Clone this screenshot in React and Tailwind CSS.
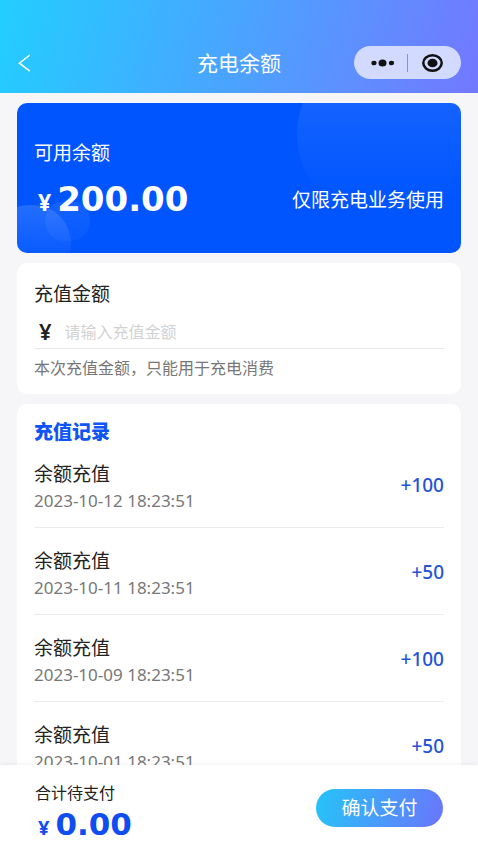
import { useState } from 'react';

const RECORDS = [
  { id: 1, title: '余额充值', time: '2023-10-12 18:23:51', amount: '+100' },
  { id: 2, title: '余额充值', time: '2023-10-11 18:23:51', amount: '+50' },
  { id: 3, title: '余额充值', time: '2023-10-09 18:23:51', amount: '+100' },
  { id: 4, title: '余额充值', time: '2023-10-01 18:23:51', amount: '+50' },
];

// ── Header ────────────────────────────────────────────────────────────────────
function Header() {
  return (
    <header className="grid shrink-0 grid-cols-[1fr_auto_1fr] items-center bg-linear-[105deg] from-[#22ceff] to-[#7378ff] px-[17px] pt-[46px] pb-[14px]">
      <button type="button" aria-label="返回" className="w-4 justify-self-start text-white">
        <svg viewBox="0 0 16 20" className="h-5 w-4" fill="none" stroke="currentColor" strokeWidth="1.5">
          <path d="M12.8 2 L2.4 10.2 L12.8 18.2" />
        </svg>
      </button>
      <h1 className="pb-px text-[21px] leading-[30px] text-white">充电余额</h1>
      <div className="flex h-[33px] w-[107px] items-center justify-self-end rounded-full bg-[#d3daff]">
        <button type="button" aria-label="更多" className="flex flex-1 justify-center pl-1">
          <svg viewBox="0 0 24 10" className="h-[10px] w-6" fill="#111">
            <ellipse cx="3" cy="5" rx="2.6" ry="2.3" />
            <ellipse cx="11.5" cy="5" rx="4" ry="3.5" />
            <ellipse cx="20.5" cy="5" rx="2.6" ry="2.3" />
          </svg>
        </button>
        <span className="h-[18px] w-px bg-[#8d93b0]" />
        <button type="button" aria-label="关闭" className="flex flex-1 justify-center pr-1">
          <svg viewBox="0 0 22 18" className="h-[18px] w-[22px]">
            <ellipse cx="10.5" cy="9" rx="9.2" ry="7.7" fill="none" stroke="#111" strokeWidth="2.5" />
            <ellipse cx="10.5" cy="9" rx="5" ry="4.3" fill="#111" />
          </svg>
        </button>
      </div>
    </header>
  );
}

// ── Balance card ──────────────────────────────────────────────────────────────
function BalanceCard() {
  return (
    <section className="relative overflow-hidden rounded-[10px] bg-[#0055ff] px-[17px] pt-[35px] pb-8 text-white">
      {/* decorative bubbles */}
      <span className="absolute -top-[52px] -right-[40px] h-[166px] w-[204px] rounded-full bg-linear-to-b from-white/8 from-30% to-white/0 to-90%" />
      <span className="absolute top-[102px] -left-[26px] h-[76px] w-[80px] rounded-full bg-linear-to-b from-white/14 to-white/2 to-75%" />
      <span className="absolute top-[98px] left-[28px] h-[40px] w-[45px] rounded-full bg-linear-to-b from-white/8 to-white/3" />
      <h2 className="relative text-[19px] leading-7">可用余额</h2>
      <div className="relative mt-[11px] flex items-center justify-between">
        <p className="flex items-baseline gap-[6px] pl-1 font-bold">
          <span className="font-['Noto_Sans',sans-serif] text-[23px] leading-none">¥</span>
          <span className="font-['DejaVu_Sans',sans-serif] text-[34px] leading-[44px]">200.00</span>
        </p>
        <p className="text-[19px] leading-7">仅限充电业务使用</p>
      </div>
    </section>
  );
}

// ── Amount form ───────────────────────────────────────────────────────────────
function AmountCard({ value, onChange }) {
  return (
    <section className="rounded-[10px] bg-white px-[17px] pt-4 pb-[15px]">
      <label htmlFor="amount" className="block text-[19px] leading-7 text-[#222]">充值金额</label>
      <div className="mt-2 flex h-[34px] items-center gap-[13px] border-b border-[#e8e8e8] pb-px pl-[5px]">
        <span className="font-['Noto_Sans',sans-serif] text-[22px] leading-8 font-semibold text-[#222]">¥</span>
        <input
          id="amount"
          inputMode="decimal"
          value={value}
          onChange={(e) => onChange(e.target.value)}
          placeholder="请输入充值金额"
          className="min-w-0 flex-1 text-base text-[#222] outline-none placeholder:text-[#d2d2d2]"
        />
      </div>
      <p className="mt-[6px] text-base leading-6 text-[#777]">本次充值金额，只能用于充电消费</p>
    </section>
  );
}

// ── Recharge records ──────────────────────────────────────────────────────────
function RecordList() {
  return (
    <section className="rounded-[10px] bg-white px-[17px] pt-[17px]">
      <h2 className="text-[19px] leading-5 font-black text-[#0f55f5]">充值记录</h2>
      <ul>
        {RECORDS.map((r) => (
          <li key={r.id} className="flex items-center justify-between border-b border-[#ebebeb] pt-[18px] pb-3">
            <div>
              <h3 className="text-[19px] leading-7 text-[#222]">{r.title}</h3>
              <p className="font-['Noto_Sans',sans-serif] text-[17px] leading-7 text-[#777]">{r.time}</p>
            </div>
            <span className="pb-1 font-['Noto_Sans',sans-serif] text-[19px] leading-7 font-medium text-[#2453d6]">{r.amount}</span>
          </li>
        ))}
      </ul>
    </section>
  );
}

// ── Pay bar ───────────────────────────────────────────────────────────────────
function PayBar() {
  return (
    <footer className="flex shrink-0 items-center justify-between bg-white px-[35px] py-[6px] shadow-[0_-1px_4px_rgba(0,0,0,0.06)]">
      <div className="pt-[9px]">
        <p className="text-base leading-6 text-[#222]">合计待支付</p>
        <p className="flex items-baseline gap-[6px] pl-[3px] font-bold text-[#0f4df0]">
          <span className="font-['Noto_Sans',sans-serif] text-xl leading-none">¥</span>
          <span className="font-['DejaVu_Sans',sans-serif] text-[31px] leading-10">0.00</span>
        </p>
      </div>
      <button
        type="button"
        className="h-[38px] w-[127px] rounded-full bg-linear-[105deg] from-[#25c4f8] to-[#6a75fb] text-[19px] text-white"
      >
        确认支付
      </button>
    </footer>
  );
}

export default function App() {
  const [amount, setAmount] = useState('');

  return (
    <div className="flex h-screen flex-col bg-[#f6f6f9] font-['Noto_Sans_CJK_SC',sans-serif]">
      <Header />
      <main className="flex min-h-0 flex-1 flex-col gap-[10px] overflow-y-auto px-[17px] pt-[10px] [scrollbar-width:none] *:shrink-0">
        <BalanceCard />
        <AmountCard value={amount} onChange={setAmount} />
        <RecordList />
      </main>
      <PayBar />
    </div>
  );
}
